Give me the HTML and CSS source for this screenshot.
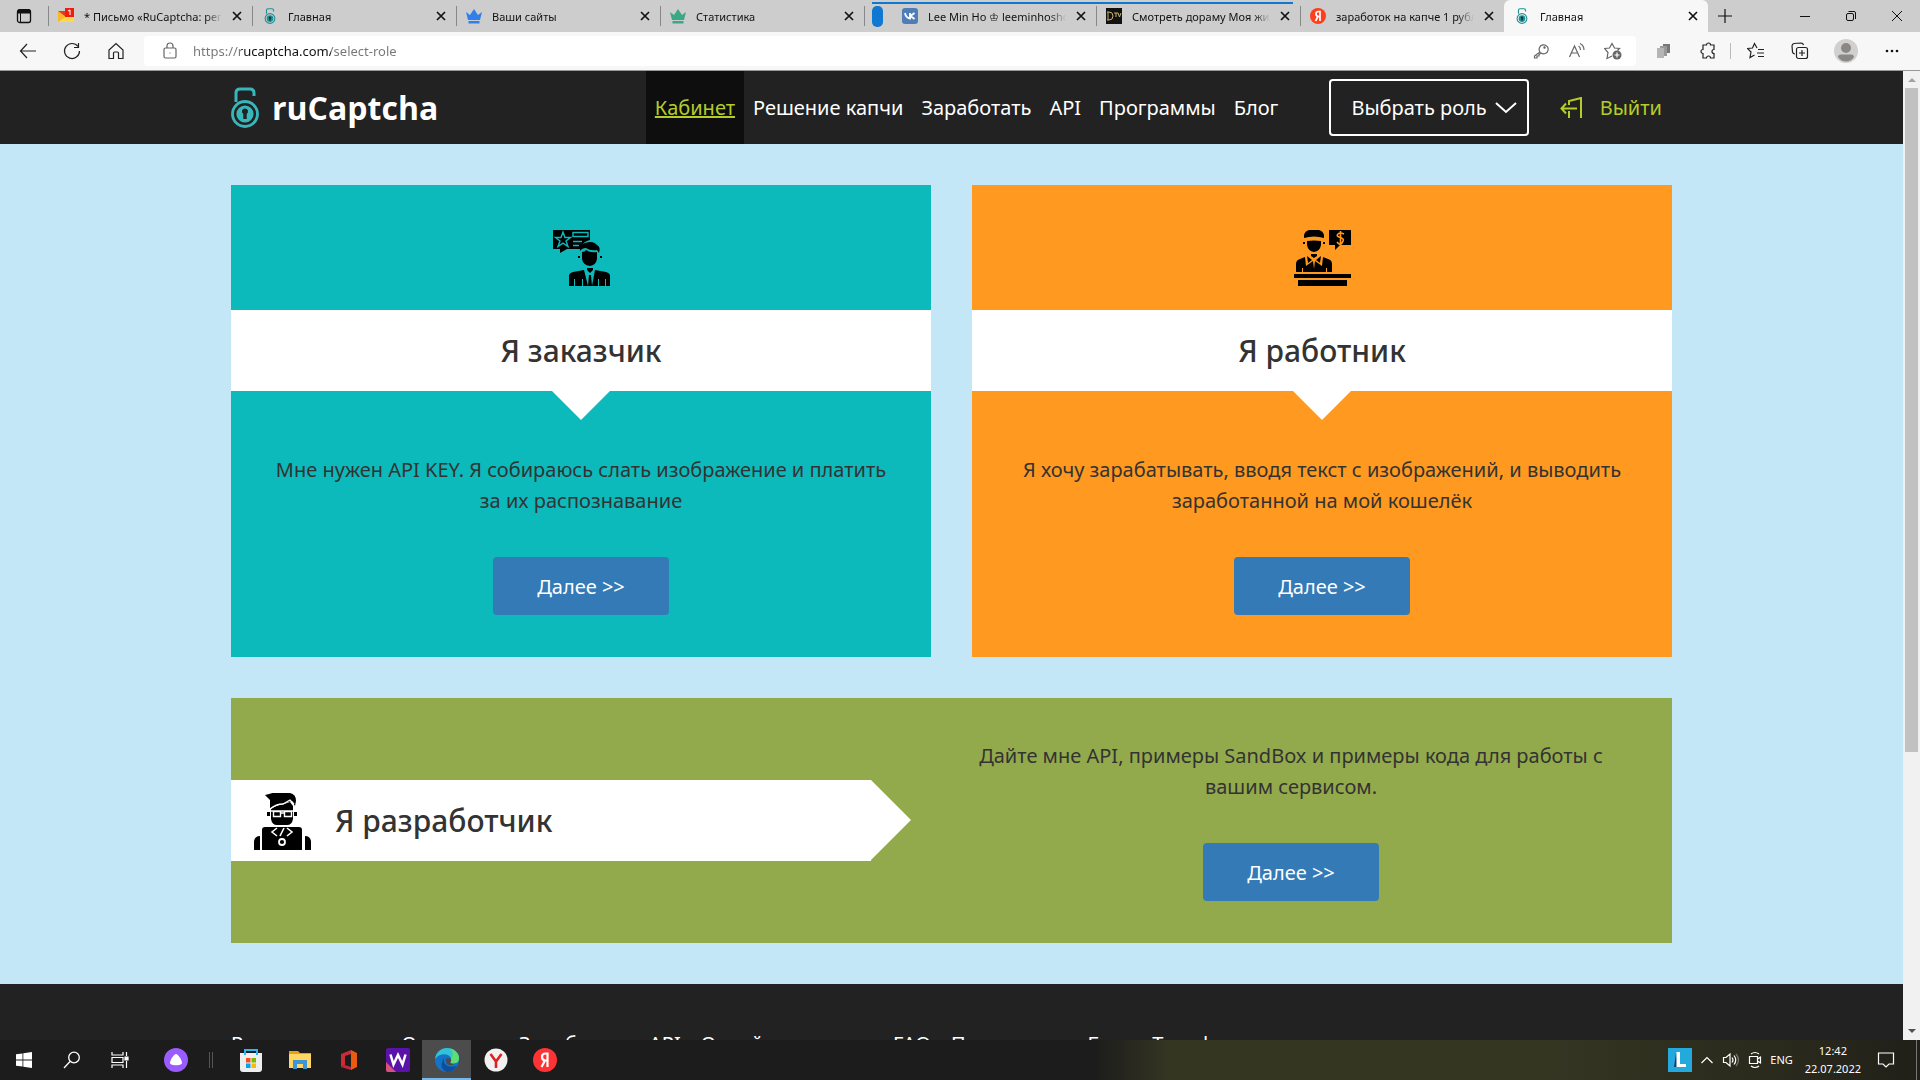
FILE: index.html
```html
<!DOCTYPE html>
<html lang="ru">
<head>
<meta charset="utf-8">
<title>Главная</title>
<link rel="stylesheet" href="styles.css">
</head>
<body>
<svg class="defs" aria-hidden="true">
  <symbol id="x" viewBox="0 0 10 10"><path d="M1 1l8 8M9 1L1 9" fill="none" stroke="currentColor" stroke-width="1.7"/></symbol>
  <symbol id="lock" viewBox="0 0 28 41"><path d="M5 15V6q0-4 4-4h10q4 0 4 4v3" fill="none" stroke="currentColor" stroke-width="3"/><circle cx="14" cy="27" r="12.500" fill="none" stroke="currentColor" stroke-width="2.800"/><circle cx="14" cy="27" r="8.600" fill="currentColor"/><path d="M14 21.500a3 3 0 0 1 1.700 5.500v5h-3.400v-5a3 3 0 0 1 1.700-5.500z" class="keyhole"/></symbol>
  <symbol id="crown" viewBox="0 0 16 16"><path d="M0 4l4 3 4-6 4 6 4-3-2 8H2zM2.500 13h11v2.500h-11z" fill="currentColor"/></symbol>
</svg>

<header class="browser">
  <nav class="tabs" aria-label="Вкладки">
    <button class="tab-menu" aria-label="Действия вкладок"><svg width="16" height="16" viewBox="0 0 16 16"><rect x="1.500" y="2" width="13" height="12.500" rx="2" fill="none" stroke="#111" stroke-width="1.300"/><path d="M1 4q0-3 3-3h8q3 0 3 3v1.500H1zM4 5h1v9H4z" fill="#111"/></svg></button>
    <div class="tab"><svg class="fav" viewBox="0 0 16 16"><path d="M0 3h16v11H0z" fill="#ffd84a"/><path d="M0 3l8 6-8 5z" fill="#f7b928"/><path d="M0 3h8v6z" fill="#e43a2c"/><path d="M7 0h9v9H7z" fill="#f01c0c"/><path d="M10 3l2-1v5" fill="none" stroke="#fff"/></svg><span class="name">* Письмо «RuCaptcha: регистрация»</span><button class="close" aria-label="Закрыть"><svg><use href="#x"/></svg></button></div>
    <div class="tab"><svg class="fav teal"><use href="#lock"/></svg><span class="name">Главная</span><button class="close" aria-label="Закрыть"><svg><use href="#x"/></svg></button></div>
    <div class="tab"><svg class="fav blue"><use href="#crown"/></svg><span class="name">Ваши сайты</span><button class="close" aria-label="Закрыть"><svg><use href="#x"/></svg></button></div>
    <div class="tab"><svg class="fav mint"><use href="#crown"/></svg><span class="name">Статистика</span><button class="close" aria-label="Закрыть"><svg><use href="#x"/></svg></button></div>
    <div class="tab-group">
      <span class="pill"></span>
      <div class="tab first"><svg class="fav" viewBox="0 0 16 16"><rect width="16" height="16" rx="3" fill="#4f7db8"/><path d="M3 5q1 5 5 5.500V5M12.500 5L8.500 8l4 3" fill="none" stroke="#fff" stroke-width="1.800"/></svg><span class="name">Lee Min Ho ♔ leeminhoshop</span><button class="close" aria-label="Закрыть"><svg><use href="#x"/></svg></button></div>
      <div class="tab"><svg class="fav" viewBox="0 0 16 16"><path d="M0 0h16v16H0z" fill="#111"/><path d="M2 4v8M1 4h2q4 0 4 4t-4 4H1M8 5h4M10 5v4M12 5l1.500 4L15 5" fill="none" stroke="#c9b36b"/></svg><span class="name">Смотреть дораму Моя жизнь</span><button class="close" aria-label="Закрыть"><svg><use href="#x"/></svg></button></div>
    </div>
    <div class="tab"><svg class="fav" viewBox="0 0 16 16"><circle cx="8" cy="8" r="8" fill="#fc3f1d"/><path d="M10 13V3.500H8.500Q6 3.500 6 6t3 2.500H10M8 8.500L5.500 13" fill="none" stroke="#fff" stroke-width="1.700"/></svg><span class="name">заработок на капче 1 рубль</span><button class="close" aria-label="Закрыть"><svg><use href="#x"/></svg></button></div>
    <div class="tab active"><svg class="fav teal"><use href="#lock"/></svg><span class="name">Главная</span><button class="close" aria-label="Закрыть"><svg><use href="#x"/></svg></button></div>
    <button class="new-tab" aria-label="Новая вкладка"><svg width="16" height="16" viewBox="0 0 16 16"><path d="M8 1v14M1 8h14" stroke="#111" stroke-width="1.200"/></svg></button>
    <div class="window-controls">
      <button aria-label="Свернуть"><svg width="12" height="12" viewBox="0 0 12 12"><path d="M1 6.500h10" stroke="#111"/></svg></button>
      <button aria-label="Восстановить"><svg width="12" height="12" viewBox="0 0 12 12" fill="none" stroke="#111"><rect x="1.500" y="3.500" width="7" height="7" rx="1.500"/><path d="M3.500 1.500H9q1.500 0 1.500 1.500v6"/></svg></button>
      <button aria-label="Закрыть окно"><svg width="12" height="12" viewBox="0 0 12 12"><path d="M1 1l10 10M11 1L1 11" stroke="#111"/></svg></button>
    </div>
  </nav>
  <div class="toolbar">
    <div class="history">
      <button aria-label="Назад"><svg width="18" height="18" viewBox="0 0 18 18"><path d="M17 9H1.500M8 2L1.500 9 8 16"/></svg></button>
      <button aria-label="Обновить"><svg width="18" height="18" viewBox="0 0 18 18"><path d="M15 4.500A7.500 7.500 0 1 0 16.500 9M15.500 1v4.500H11"/></svg></button>
      <button aria-label="Домой"><svg width="18" height="18" viewBox="0 0 18 18"><path d="M2 16.500V8l7-6.500L16 8v8.500h-4.500V11q0-1-1-1h-3q-1 0-1 1v5.500z"/></svg></button>
    </div>
    <div class="address">
      <svg width="14" height="18" viewBox="0 0 14 18"><rect x="1" y="6" width="12" height="10" rx="1.500"/><path d="M4 6V4q0-3 3-3t3 3v2M6.500 11h1"/></svg>
      <input type="text" aria-label="Адрес" value="https://rucaptcha.com/select-role">
      <button aria-label="Пароль"><svg width="16" height="16" viewBox="0 0 16 16"><path d="M7 9l-5.500 4v2H4v-2h2v-1.500l2-1.500A4.500 4.500 0 1 0 7 9z"/><circle cx="11.500" cy="4.500" r=".6"/></svg></button>
      <button aria-label="Прочесть вслух"><svg width="18" height="18" viewBox="0 0 18 18"><path d="M1.500 15L6.500 4l5 11M3.500 11h6M10.500 4q2 1 2 4M12 1.500q4 2 4 6.500"/></svg></button>
      <button aria-label="В избранное"><svg width="18" height="18" viewBox="0 0 18 18"><path d="M8 14l-5 2.500 1-6-3.500-4 5-.5L8 1.500 10.500 6l5 .5-2 2"/><circle cx="13" cy="13" r="4.500" fill="#666" stroke="none"/><path d="M13 10.500v5M10.500 13h5" stroke="#fff"/></svg></button>
    </div>
    <div class="tools">
      <button aria-label="Копирование"><svg class="solid" width="18" height="18" viewBox="0 0 18 18"><path d="M8 2h7v9H8z" fill="#777"/><path d="M5 4h7v10H5z" fill="#999"/><path d="M2 6h7v10H2z" fill="#b5b5b5"/></svg></button>
      <button aria-label="Расширения"><svg width="18" height="18" viewBox="0 0 18 18"><path d="M4 3h3.500a2 2 0 0 1 4 0H15v4.500a2 2 0 0 0 0 4V16h-3.500a2 2 0 0 0-4 0H4v-4.500a2 2 0 0 1 0-4z"/></svg></button>
      <span class="rule"></span>
      <button aria-label="Избранное"><svg width="18" height="18" viewBox="0 0 18 18"><path d="M10 6L7.500 1.500 5.500 6l-5 .5L4 10l-1 5.500L7.500 13M11 7.500h6M10 11h7M11 14.500h6"/></svg></button>
      <button aria-label="Коллекции"><svg width="18" height="18" viewBox="0 0 18 18"><rect x="5.500" y="5.500" width="11" height="11" rx="2"/><path d="M11 8v6M8 11h6M4 12q-2 0-2.500-2L1 4q0-2 2-2.500L10 1q2 0 2.500 2"/></svg></button>
      <button class="avatar" aria-label="Профиль"><svg class="solid" width="24" height="24" viewBox="0 0 24 24"><circle cx="12" cy="12" r="12" fill="#d2d0ce"/><circle cx="12" cy="9" r="5" fill="#8a8886"/><path d="M4 18q0-2.500 3-2.500h10q3 0 3 2.500-3 4.500-8 4.500T4 18z" fill="#8a8886"/></svg></button>
      <button aria-label="Меню"><svg class="solid" width="18" height="18" viewBox="0 0 18 18"><g fill="#111"><circle cx="4" cy="9" r="1.300"/><circle cx="9" cy="9" r="1.300"/><circle cx="14" cy="9" r="1.300"/></g></svg></button>
    </div>
  </div>
</header>

<div class="viewport">
  <div class="page">
    <header class="site-header">
      <div class="container bar">
        <a class="logo" href="#"><svg width="28" height="41"><use href="#lock"/></svg><span>ruCaptcha</span></a>
        <nav class="menu">
          <a class="current" href="#">Кабинет</a><a href="#">Решение капчи</a><a href="#">Заработать</a><a href="#">API</a><a href="#">Программы</a><a href="#">Блог</a>
        </nav>
        <button class="role">Выбрать роль<svg width="22" height="14" viewBox="0 0 22 14"><path d="M1 2l10 9L21 2" fill="none" stroke="#fff" stroke-width="2"/></svg></button>
        <a class="exit" href="#"><svg width="22" height="22" viewBox="0 0 22 22"><path d="M9 8V4l12-3v20M9 14v7M17 11.500H1.500M6 6.500L1.500 11.500 6 16.500" fill="none" stroke="currentColor" stroke-width="2"/></svg>Выйти</a>
      </div>
    </header>
    <main class="container roles">
      <section class="card customer">
        <div class="picture"><svg width="57" height="57" viewBox="0 0 57 57"><path d="M0 1h37v10q-7 1-10 9H14l-7 4v-4H0z"/><path d="M10 3l2 5.500h5.500l-4.500 3.500 2 5.500-5-3.300-5 3.300 2-5.500L2.500 8.500H8zM20 3.500h15v4H20zM20 12.500h9M20 16.500h6" fill="none" stroke="#0cb9bb" stroke-width="1.400"/><path d="M27 22q-1-7 5-8 8-3 12 2 4 2 2 8l-2-3q-7 1-11-2-4 0-6 3z"/><path d="M29 23q3 0 4-2 4 3 11 2v7q-1 6-7 7-7-1-8-7zM25 27h2v2h-2zM47 27h2v2h-2zM34 39h6v2l-3 3-3-3zM16 57V47q0-3 4-4l11-2 4 16h-5v-7h-1v7h-7v-7h-1v7zM57 57V47q0-3-4-4l-11-2-3 16h6v-7h1v7h6v-7h1v7zM36 46h2l1 11h-4z"/></svg></div>
        <h2>Я заказчик</h2>
        <div class="body">
          <p>Мне нужен API KEY. Я собираюсь слать изображение и платить за их распознавание</p>
          <button class="next">Далее &gt;&gt;</button>
        </div>
      </section>
      <section class="card worker">
        <div class="picture"><svg width="57" height="57" viewBox="0 0 57 57"><path d="M10 9V6q1-4 5-5h10q4 1 5 5v3q-10-3-20 0zM13 12q7-1 14 0v4q-1 6-7 7-6-1-7-7zM9 13h2v2H9zM29 13h2v2h-2zM17 25h6v2l-3 2-3-2zM2 43V35q0-4 4-5l5-2 1 9 7-5 1 8 1-8 7 5 1-9 5 2q4 1 4 5v8h-5v-4h-1v4H9v-4H8v4zM13 27l5 4-4 3zM27 27l-5 4 4 3zM0 45h57v4H0zM4 51h49v6H4zM35 1h22v15H46l-5 5v-5h-6z"/><path d="M50 5q-4-2-6 0t1 3 4 2-1 4-5-1M46.500 2v13" fill="none" stroke="#ff991f" stroke-width="1.600"/></svg></div>
        <h2>Я работник</h2>
        <div class="body">
          <p>Я хочу зарабатывать, вводя текст с изображений, и выводить заработанной на мой кошелёк</p>
          <button class="next">Далее &gt;&gt;</button>
        </div>
      </section>
      <section class="card developer">
        <h2><svg width="57" height="57" viewBox="0 0 57 57"><path d="M11 2l4-1q5-2 12-1h9q6 1 6 8l-1 5-3-5q-5 1-9 3-8 0-13 5V7zM17 16q5-4 13-5l6-2 3 4v5H17zM17 18h22v8q-1 6-6 6H23q-5 0-6-6zM13 19h3v4h-3zM40 19h3v4h-3zM8 37q0-3 3-3h34q3 0 3 3v20H8zM0 57V48q1-5 6-5v14zM57 57V48q-1-5-6-5v14z"/><g fill="none" stroke="#fff"><path d="M15 18h26M19.500 18.500h7v5h-7zM30.500 18.500h7v5h-7zM26.500 20h4M16 16q6-5 13-5l7-4 4 4" stroke-width="1.400"/><path d="M23 35l-5 4 5 4M33 35l5 4-5 4M30 35l-4 8" stroke-width="1.600"/><circle cx="28" cy="49" r="3" stroke-width="1.800"/></g></svg>Я разработчик</h2>
        <div class="body">
          <p>Дайте мне API, примеры SandBox и примеры кода для работы с вашим сервисом.</p>
          <button class="next">Далее &gt;&gt;</button>
        </div>
      </section>
    </main>
    <footer class="site-footer">
      <nav class="container links">
        <a href="#">Решение капчи</a><a href="#">О сервисе</a><a href="#">Заработать</a><a href="#">API</a><a href="#">Онлайн проверка</a><a href="#">FAQ</a><a href="#">Программы</a><a href="#">Блог</a><a href="#">Тарифы</a>
      </nav>
    </footer>
  </div>
  <div class="scrollbar" aria-hidden="true"><i class="up"></i><div class="track"><div class="thumb"></div></div><i class="down"></i></div>
</div>

<footer class="taskbar">
  <div class="launch">
    <button aria-label="Пуск"><svg width="16" height="16" viewBox="0 0 16 16" fill="#fff"><path d="M0 2.300L6.500 1.400v6.200H0zM7.300 1.300L16 0v7.600H7.300zM0 8.400h6.500v6.200L0 13.700zM7.300 8.400H16V16l-8.700-1.300z"/></svg></button>
    <button aria-label="Поиск"><svg width="18" height="18" viewBox="0 0 18 18" fill="none" stroke="#fff" stroke-width="1.300"><circle cx="11" cy="6.500" r="5.300"/><path d="M7 10.500L1 17"/></svg></button>
    <button aria-label="Представление задач"><svg width="18" height="18" viewBox="0 0 18 18" fill="none" stroke="#fff" stroke-width="1.200"><path d="M1 1v3h11V1M1 17v-3h11v3M1 6.500h11v5H1zM15.500 1v4M15.500 10v7"/><path d="M14 6h3v3h-3z" fill="#fff"/></svg></button>
  </div>
  <button class="alice" aria-label="Алиса"><svg width="24" height="24" viewBox="0 0 24 24"><circle cx="12" cy="12" r="12" fill="#9a5bff"/><path d="M12 6c2 0 6 6 6 9s-12 3-12 0 4-9 6-9z" fill="#fff"/></svg></button>
  <span class="grip"></span>
  <div class="apps">
    <button aria-label="Store"><svg width="24" height="24" viewBox="0 0 24 24"><path d="M6 7V2h12v5" fill="none" stroke="#2fb4f2" stroke-width="2"/><path d="M1 5h22v16q0 3-3 3H4q-3 0-3-3z" fill="#eee"/><path d="M6 7V4M18 7V4" stroke="#2fb4f2" stroke-width="2"/><path d="M7 10h4.500v4.500H7z" fill="#f25022"/><path d="M12.500 10H17v4.500h-4.500z" fill="#7fba00"/><path d="M7 15.500h4.500V20H7z" fill="#00a4ef"/><path d="M12.500 15.500H17V20h-4.500z" fill="#ffb900"/></svg></button>
    <button aria-label="Проводник"><svg width="24" height="24" viewBox="0 0 24 24"><path d="M1 3h9l2 2h11v4H1z" fill="#e5a01a"/><path d="M1 6h22v14H1z" fill="#ffd661"/><path d="M5 21v-9h14v9h-4v-5H9v5z" fill="#3d95d8"/></svg></button>
    <button aria-label="Office"><svg width="24" height="24" viewBox="0 0 24 24"><path d="M4 6l10-4v4L8 8v9l-4 2z" fill="#c82e38"/><path d="M14 2l6 3v14l-6 3z" fill="#eb5a10"/><path d="M4 19l4-2 6 2v3z" fill="#c3243c"/></svg></button>
    <button aria-label="W"><svg width="24" height="24" viewBox="0 0 24 24"><rect width="24" height="24" rx="2" fill="#5b12a8"/><path d="M0 14l10 10H2q-2 0-2-2z" fill="#d8507c"/><path d="M4.500 6.500l3 10L12 7l4.500 9.500 3-10" fill="none" stroke="#fff" stroke-width="2.500"/></svg></button>
    <button class="open" aria-label="Edge"><svg width="24" height="24" viewBox="0 0 24 24"><circle cx="12" cy="12" r="12" fill="#1473c4"/><path d="M0 11C1 4 6 0 12 0c7 0 12 5 12 10s-4 6-8 5c-2-1 1-2 0-5C14 6 6 4 0 11z" fill="#35c1d5"/><path d="M15 .5c6 1.500 9 6 9 9.500 0 5-4 6-8 5-2-1 1-2 0-5q4-3-1-9.500z" fill="#5fdc72"/><path d="M9 10q-2 11 13 8-4 6-10 6Q3 20 9 10z" fill="#0c4f9b"/><path d="M12 10q5 0 4 3-2 3 3 3.500-7 2-8-3-.5-2 1-3.500z" fill="#4c4c4c"/></svg></button>
    <button aria-label="Yandex Browser"><svg width="24" height="24" viewBox="0 0 24 24"><circle cx="12" cy="12" r="11.500" fill="#f1f1f1"/><path d="M6.500 6l5.500 7.500L17.500 6M12 13v7" fill="none" stroke="#d22" stroke-width="2.600"/></svg></button>
    <button aria-label="Yandex"><svg width="24" height="24" viewBox="0 0 24 24"><circle cx="12" cy="12" r="12" fill="#f33"/><path d="M14.500 19V5.500h-2Q9 5.500 9 9t3.500 3.500h2M12 12.500L8.500 19" fill="none" stroke="#fff" stroke-width="2.200"/></svg></button>
  </div>
  <div class="tray">
    <svg class="solid" width="24" height="24" viewBox="0 0 24 24"><path d="M0 0h24v24H0z" fill="#23a9dc"/><path d="M8 5L6 19h4z" fill="#163c7c"/><path d="M8.500 4H12v12h6v3H8.500z" fill="#fff"/></svg>
    <svg width="14" height="18" viewBox="0 0 14 18"><path d="M1.500 12L7 6.500l5.500 5.500"/></svg>
    <svg width="18" height="18" viewBox="0 0 18 18"><path d="M1.500 6.500v5H4L8 15V3L4 6.500zM10 6.500q2 2.500 0 5M12 4.500q3.500 4.500 0 9"/><path d="M14 3q5 6 0 12" stroke="#777"/></svg>
    <svg width="14" height="18" viewBox="0 0 14 18"><path d="M1.500 5.500h8v7h-8zM9.500 8l3-2v6l-3-2M3 3q4-3 8 0M3 15q4 3 8 0"/></svg>
    <span>ENG</span>
    <time>12:42<br>22.07.2022</time>
    <svg width="18" height="18" viewBox="0 0 18 18"><path d="M1.500 2h15v11H12l-3 3-3-3H1.500z"/></svg>
  </div>
</footer>
</body>
</html>
```
FILE: styles.css
```css
* { box-sizing: border-box; }
body {
  margin: 0;
  height: 100vh;
  display: flex;
  flex-direction: column;
  overflow: hidden;
  font-family: "Noto Sans", "Open Sans", sans-serif;
  color: #333;
}
button { font: inherit; color: inherit; background: none; border: 0; padding: 0; }
a { color: inherit; text-decoration: none; }
svg { display: block; flex: none; }
.defs { position: absolute; width: 0; height: 0; }
.keyhole { fill: #222; }

/* browser window */
.browser { flex: none; font-size: 11px; color: #111; border-bottom: 1px solid #999; background: #f7f7f7; }
.tabs { display: flex; height: 32px; background: #cdcdcd; }
.tab-menu { width: 48px; display: grid; place-items: center; }
.tab { position: relative; flex: 0 1 204px; min-width: 0; display: flex; align-items: center; gap: 10px; padding: 0 10px; }
.tab::before { content: ""; position: absolute; left: 0; top: 6px; bottom: 6px; width: 1px; background: #888; }
.tab .fav { width: 16px; height: 16px; }
.fav .keyhole { fill: #fff; }
.name { flex: 1; overflow: hidden; white-space: nowrap; mask-image: linear-gradient(90deg, #000 88%, transparent); }
.close svg { width: 10px; height: 10px; }
.teal { color: #1d9296; }
.blue { color: #2f80ed; }
.mint { color: #3aa785; }
.tab-group { flex: 0 1 436px; min-width: 0; display: flex; align-items: center; position: relative; padding-left: 8px; }
.tab-group::after { content: ""; position: absolute; left: 8px; right: 7px; top: 2px; height: 2px; background: #0f78d0; }
.tab-group::before { content: ""; position: absolute; left: 0; top: 6px; bottom: 6px; width: 1px; background: #888; }
.pill { flex: none; width: 11px; height: 21px; border-radius: 5px; background: #0f78d0; margin-right: 9px; }
.tab-group .tab { height: 32px; }
.tab.first::before, .tab.active::before { display: none; }
.tab.active { background: #f7f7f7; border-radius: 6px 6px 0 0; }
.new-tab { width: 34px; display: grid; place-items: center; }
.window-controls { display: flex; margin-left: auto; }
.window-controls button { width: 46px; display: grid; place-items: center; }
.toolbar { display: flex; align-items: center; height: 38px; }
.toolbar svg { fill: none; stroke: #222; stroke-width: 1.2; }
.toolbar button { width: 44px; display: grid; place-items: center; }
.history { display: flex; width: 144px; padding-left: 6px; }
.address { flex: 1; display: flex; align-items: center; height: 30px; padding: 0 5px 0 19px; background: #fff; border-radius: 4px; }
.toolbar .address svg { stroke: #666; }
.toolbar .address button { width: 36px; }
.address input {
  flex: 1; border: 0; padding: 0; margin-left: 16px; font: 13px "Noto Sans", sans-serif; outline: 0;
  color: transparent; background: linear-gradient(90deg, #767676 48px, #111 48px, #111 138px, #767676 138px); background-clip: text;
}
.tools { display: flex; align-items: center; padding: 0 6px; }
.rule { width: 1px; height: 16px; margin-right: 3px; background: #bbb; }
.toolbar .avatar { width: 48px; }
.toolbar .solid, .tray .solid { stroke: none; }

/* page area */
.viewport { flex: 1; min-height: 0; display: flex; }
.page { flex: 1; min-width: 0; overflow: hidden; background: #c3e7f7; font-size: 20px; line-height: 31px; }
.container { max-width: 1441px; margin: 0 auto; }
.site-header { background: #222; color: #fff; }
.bar { display: flex; align-items: center; height: 73px; padding-right: 10px; }
.logo { display: flex; align-items: center; gap: 13px; margin-right: auto; color: #38b6b9; }
.logo span { color: #fff; font: 700 32px/41px "Open Sans", sans-serif; }
.menu { display: flex; align-self: stretch; align-items: center; }
.menu a { padding: 21px 9px; }
.menu .current { background: #0e0e0e; color: #b5cc2a; text-decoration: underline; }
.role { display: flex; align-items: center; gap: 8px; height: 57px; margin: 0 31px 0 42px; padding: 0 10px 0 20px; border: 2px solid #fff; border-radius: 4px; }
.exit { display: flex; align-items: center; gap: 18px; color: #b5cc2a; }

.roles { display: grid; grid-template-columns: 1fr 1fr; gap: 41px; padding: 41px 0; text-align: center; }
.card { padding-bottom: 42px; }
.customer { background: #0cb9bb; }
.worker { background: #ff991f; }
.developer { background: #92aa4b; }
.picture { display: flex; justify-content: center; padding: 44px 0 24px; }
h2 { position: relative; margin: 0; padding-top: 1px; background: #fff; font-size: 30px; font-weight: 500; line-height: 80px; }
.card h2::after { content: ""; position: absolute; top: 100%; left: 50%; margin-left: -29px; border: 29px solid transparent; border-top-color: #fff; border-bottom: 0; }
.body { padding: 63px 40px 0; }
p { margin: 0 0 41px; }
.next { height: 58px; padding: 0 44px; background: #337ab7; color: #fff; border-radius: 4px; }
.developer { grid-column: 1 / -1; display: grid; grid-template-columns: 640px 1fr; column-gap: 39px; align-items: center; padding: 0; }
.developer h2 { display: flex; align-items: center; gap: 24px; padding-left: 23px; }
.card.developer h2::after { top: 0; left: 100%; margin: 0; border: 40px solid transparent; border-left-color: #fff; border-right: 0; }
.developer .body { padding: 42px 60px; }

.site-footer { background: #222; color: #fff; padding: 44px 0 80px; }
.links { display: flex; gap: 20px; white-space: nowrap; }

.scrollbar { width: 17px; background: #f1f1f1; display: flex; flex-direction: column; align-items: center; padding: 7px 0; gap: 6px; }
.track { flex: 1; align-self: stretch; padding: 0 2px; }
.thumb { height: 71%; background: #c1c1c1; }
.up, .down { border: 4px solid transparent; }
.up { border-top: 0; border-bottom-color: #a3a3a3; }
.down { border-bottom: 0; border-top-color: #505050; }

/* taskbar */
.taskbar { flex: none; height: 40px; display: flex; align-items: center; background: linear-gradient(90deg, #1c1c1c 57%, #353622 61%, #353622 80%, #28281c 94%, #202019); color: #fff; font-size: 11px; line-height: 18px; }
.launch, .apps { display: flex; align-self: stretch; }
.launch button { width: 48px; display: grid; place-items: center; }
.alice { margin-left: 20px; }
.grip { width: 4px; height: 16px; margin: 0 13px 0 21px; border: solid #555; border-width: 0 1px; }
.apps button { width: 49px; display: grid; place-items: center; }
.apps .open { background: #4c4c4c; box-shadow: inset 0 -2px #76b9ed; }
.tray { display: flex; align-self: stretch; align-items: center; gap: 8px; margin-left: auto; padding-right: 21px; margin-right: 3px; border-right: 1px solid #777; }
.tray svg { fill: none; stroke: #fff; stroke-width: 1.2; }
.tray time { text-align: center; margin: 0 8px 0 4px; }
```
